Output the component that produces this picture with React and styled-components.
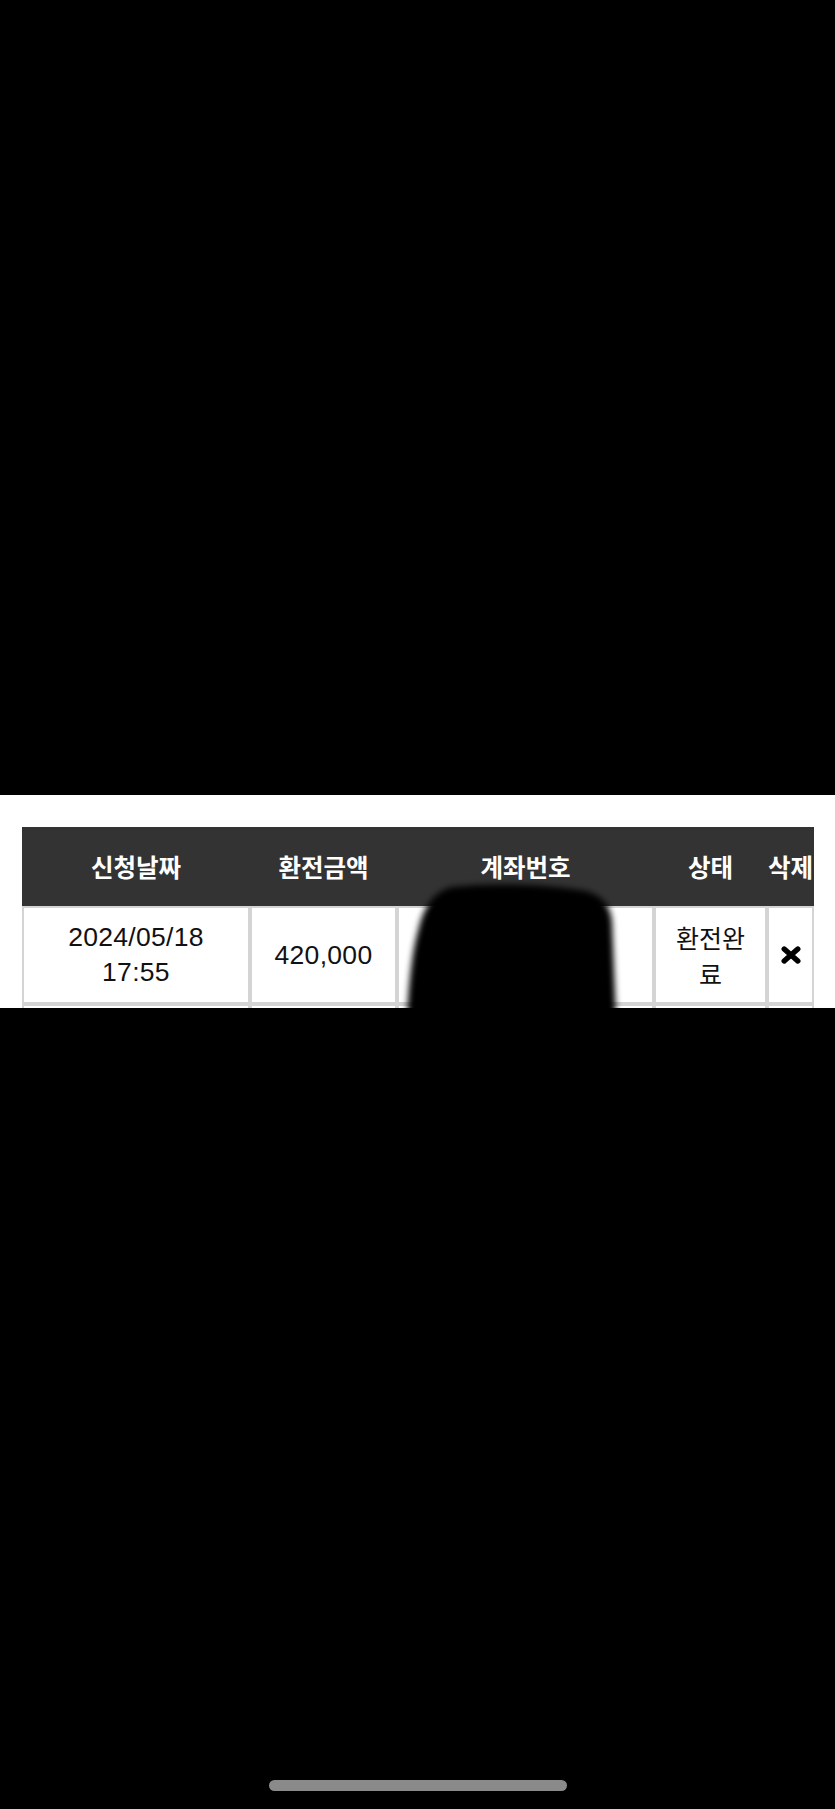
import React from 'react';
import styled, { createGlobalStyle } from 'styled-components';

const GlobalStyle = createGlobalStyle`
  html, body {
    margin: 0;
    padding: 0;
    background: #000;
  }
`;

const Screen = styled.div`
  display: flex;
  flex-direction: column;
  width: 835px;
  height: 1809px;
  background: #000;
  overflow: hidden;
`;

const TopShade = styled.div`
  flex-shrink: 0;
  height: 795px;
`;

const Panel = styled.section`
  position: relative;
  flex-shrink: 0;
  height: 213px;
  padding: 32px 0 0 22px;
  box-sizing: border-box;
  background: #fff;
  overflow: hidden;
`;

const Table = styled.table`
  width: 792px;
  table-layout: fixed;
  border-collapse: separate;
  border-spacing: 0;
  font-family: 'Liberation Sans', 'Noto Sans CJK KR', sans-serif;
  color: #111;
`;

const HeadCell = styled.th`
  height: 79px;
  padding: 0;
  background: #333;
  color: #fff;
  font-family: 'Noto Sans CJK KR', sans-serif;
  font-size: 24.5px;
  font-weight: 700;
  text-align: center;
  vertical-align: middle;
  white-space: nowrap;
  box-sizing: border-box;
`;

const Cell = styled.td`
  height: 98px;
  padding: 0 ${(p) => (p.$korean ? 12 : 4)}px;
  border: 2px solid #d4d4d4;
  box-sizing: border-box;
  font-size: ${(p) => (p.$korean ? 25 : 26.5)}px;
  line-height: ${(p) => (p.$korean ? 36 : 35)}px;
  letter-spacing: ${(p) => (p.$korean ? 0 : 0.3)}px;
  font-family: ${(p) =>
    p.$korean ? "'Noto Sans CJK KR', sans-serif" : "'Liberation Sans', 'Noto Sans CJK KR', sans-serif"};
  text-align: center;
  vertical-align: middle;
  word-break: break-all;
`;

const DeleteButton = styled.button`
  display: inline-flex;
  align-items: center;
  justify-content: center;
  padding: 0;
  margin: 6px 0 0 1px;
  border: 0;
  background: none;
  cursor: pointer;
`;

const Redaction = styled.svg`
  position: absolute;
  left: 396px;
  top: 82px;
  width: 236px;
  height: 140px;
  pointer-events: none;
`;

const BottomShade = styled.div`
  flex: 1;
  display: flex;
  align-items: flex-end;
  justify-content: center;
  padding-bottom: 18px;
`;

const HomeIndicator = styled.div`
  width: 298px;
  height: 11px;
  border-radius: 6px;
  background: #8a8a8a;
`;

const columns = [
  { label: '신청날짜', width: 228 },
  { label: '환전금액', width: 147 },
  { label: '계좌번호', width: 257 },
  { label: '상태', width: 113 },
  { label: '삭제', width: 47 },
];

const rows = [
  { date: '2024/05/18', time: '17:55', amount: '420,000', status: '환전완료' },
];

const CrossIcon = () => (
  <svg width="20" height="18" viewBox="0 0 20 18">
    <path
      d="M3.2 3 L16.8 15 M16.8 3 L3.2 15"
      stroke="#000"
      strokeWidth="5.4"
      strokeLinecap="round"
      fill="none"
    />
  </svg>
);

const App = () => (
  <>
    <GlobalStyle />
    <Screen>
      <TopShade />
      <Panel>
        <Table>
          <colgroup>
            {columns.map((c) => (
              <col key={c.label} style={{ width: c.width }} />
            ))}
          </colgroup>
          <thead>
            <tr>
              {columns.map((c) => (
                <HeadCell key={c.label}>{c.label}</HeadCell>
              ))}
            </tr>
          </thead>
          <tbody>
            {rows.map((r) => (
              <tr key={r.date + r.time}>
                <Cell>
                  {r.date}
                  <br />
                  {r.time}
                </Cell>
                <Cell>{r.amount}</Cell>
                <Cell />
                <Cell $korean>{r.status}</Cell>
                <Cell>
                  <DeleteButton aria-label="삭제">
                    <CrossIcon />
                  </DeleteButton>
                </Cell>
              </tr>
            ))}
            <tr>
              <Cell />
              <Cell />
              <Cell />
              <Cell />
              <Cell />
            </tr>
          </tbody>
        </Table>
        <Redaction viewBox="0 0 236 140">
          <defs>
            <filter id="soft" x="-10%" y="-10%" width="120%" height="120%">
              <feGaussianBlur stdDeviation="3" />
            </filter>
          </defs>
          <path
            d="M56 10 Q120 4 184 13 Q213 17 216 44 L220 140 L11 140 Q14 82 22 54 Q30 16 56 10 Z"
            fill="#000"
            filter="url(#soft)"
          />
        </Redaction>
      </Panel>
      <BottomShade>
        <HomeIndicator />
      </BottomShade>
    </Screen>
  </>
);

export default App;
